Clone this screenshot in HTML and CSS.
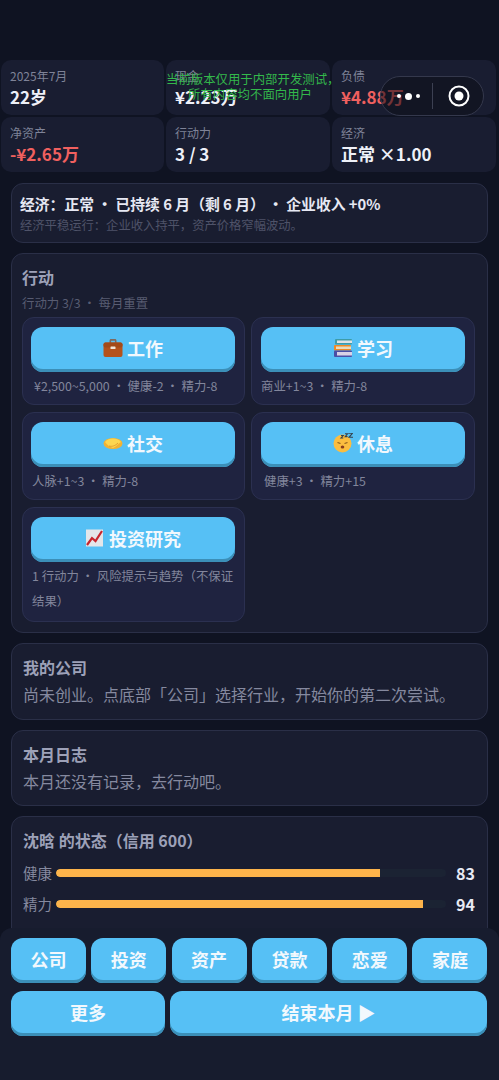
FILE: index.html
```html
<!DOCTYPE html>
<html lang="zh-CN">
<head>
<meta charset="utf-8">
<title>人生模拟</title>
<link rel="stylesheet" href="styles.css">
</head>
<body>
<div class="page">
  <div class="stats">
    <div class="stat"><div class="stat-label">2025年7月</div><div class="stat-value">22岁</div></div>
    <div class="stat"><div class="stat-label">现金</div><div class="stat-value">¥2.23万</div></div>
    <div class="stat"><div class="stat-label">负债</div><div class="stat-value red">¥4.88万</div></div>
    <div class="stat"><div class="stat-label">净资产</div><div class="stat-value red">-¥2.65万</div></div>
    <div class="stat"><div class="stat-label">行动力</div><div class="stat-value">3 / 3</div></div>
    <div class="stat"><div class="stat-label">经济</div><div class="stat-value">正常 ×1.00</div></div>
  </div>

  <section class="card econ">
    <div class="econ-title">经济：正常 · 已持续 6 月（剩 6 月） · 企业收入 +0%</div>
    <div class="econ-sub">经济平稳运行：企业收入持平，资产价格窄幅波动。</div>
  </section>

  <section class="card actions">
    <h2 class="card-title">行动</h2>
    <div class="actions-sub">行动力 3/3 · 每月重置</div>
    <div class="action-grid">
      <div class="action">
        <button class="btn btn-action">
          <svg class="emoji" viewBox="0 0 20 20"><path d="M6.500 5V2.700C6.500 1.800 7.200 1.100 8 1.100h4c.8 0 1.500.7 1.500 1.600V5h-1.600V2.800H8.100V5z" fill="#7d6a5f"/><rect x="0.500" y="4.500" width="19" height="14.500" rx="2" fill="#b5521b"/><rect x="0.500" y="4.500" width="19" height="5" rx="2" fill="#a34a18"/><rect x="7.500" y="8.500" width="5" height="2.500" rx=".6" fill="#f1e6d8"/></svg>
          工作
        </button>
        <div class="action-note pay">¥2,500~5,000 · 健康-2 · 精力-8</div>
      </div>
      <div class="action">
        <button class="btn btn-action">
          <svg class="emoji" viewBox="0 0 20 20"><rect x="2" y="1" width="17" height="5.500" rx="1" fill="#3e9ca8"/><rect x="4" y="2.500" width="15" height="2.500" fill="#dfe3e6"/><rect x="1" y="7" width="17" height="5.500" rx="1" fill="#f08a24"/><rect x="3" y="8.500" width="15" height="2.500" fill="#e7dcc0"/><rect x="1" y="12.500" width="18" height="6.500" rx="1" fill="#4a4fa6"/><rect x="4" y="14" width="15" height="3.500" fill="#d9d2e6"/></svg>
          学习
        </button>
        <div class="action-note">商业+1~3 · 精力-8</div>
      </div>
      <div class="action">
        <button class="btn btn-action">
          <svg class="emoji" viewBox="0 0 20 20"><ellipse cx="10" cy="10.500" rx="9.500" ry="5.500" fill="#f2b233"/><path d="M2 9c2-3 5-3.500 8-3.500S16 6 18 9c-2.500 1.500-4 4-8 6-3-1-6-3-8-6z" fill="#fdd650"/><path d="M6 13c3 .8 6 0 9-3" stroke="#d9922a" stroke-width=".8" fill="none"/></svg>
          社交
        </button>
        <div class="action-note">人脉+1~3 · 精力-8</div>
      </div>
      <div class="action">
        <button class="btn btn-action">
          <svg class="emoji" viewBox="0 0 20 20"><circle cx="9.500" cy="10.500" r="9" fill="#fbbd3f"/><path d="M4.500 9.500l3 1M14.500 9.500l-3 1" stroke="#8a5a1c" stroke-width="1.200" fill="none"/><ellipse cx="9.500" cy="14" rx="1.800" ry="1.500" fill="#8a3d1c"/><path d="M8 2.500h2.300L8 5h2.300M12 .8h2.500l-2.300 2.800h2.300M15.500 .3h4l-3.500 4h4" stroke="#34424f" stroke-width="1.100" fill="none"/></svg>
          休息
        </button>
        <div class="action-note rest">健康+3 · 精力+15</div>
      </div>
      <div class="action">
        <button class="btn btn-action">
          <svg class="emoji" viewBox="0 0 20 20"><rect x="1" y="1.500" width="17" height="17" fill="#e4e6ea"/><path d="M2 17l5-7 3.500 3L17 3" stroke="#c8262f" stroke-width="2.200" fill="none"/></svg>
          投资研究
        </button>
        <div class="action-note wrap">1 行动力 · 风险提示与趋势（不保证结果）</div>
      </div>
    </div>
  </section>

  <section class="card info">
    <h2 class="card-title">我的公司</h2>
    <p class="info-text">尚未创业。点底部「公司」选择行业，开始你的第二次尝试。</p>
  </section>

  <section class="card info">
    <h2 class="card-title">本月日志</h2>
    <p class="info-text">本月还没有记录，去行动吧。</p>
  </section>

  <section class="card status">
    <h2 class="card-title">沈晗 的状态（信用 600）</h2>
    <div class="bar-row">
      <span class="bar-label">健康</span>
      <div class="bar-track"><div class="bar-fill" style="width:83%"></div></div>
      <span class="bar-value">83</span>
    </div>
    <div class="bar-row">
      <span class="bar-label">精力</span>
      <div class="bar-track"><div class="bar-fill" style="width:94%"></div></div>
      <span class="bar-value">94</span>
    </div>
  </section>
</div>

<nav class="dock">
  <div class="dock-row six">
    <button class="btn btn-dock">公司</button>
    <button class="btn btn-dock">投资</button>
    <button class="btn btn-dock">资产</button>
    <button class="btn btn-dock">贷款</button>
    <button class="btn btn-dock">恋爱</button>
    <button class="btn btn-dock">家庭</button>
  </div>
  <div class="dock-row two">
    <button class="btn btn-dock">更多</button>
    <button class="btn btn-dock">结束本月 ▶</button>
  </div>
</nav>

<div class="notice">当前版本仅用于内部开发测试，<br>所有内容均不面向用户</div>

<div class="capsule">
  <div class="capsule-dots"><i class="dot"></i><i class="dot big"></i><i class="dot"></i></div>
  <div class="capsule-line"></div>
  <svg class="capsule-target" viewBox="0 0 22 22"><circle cx="11" cy="11" r="9.500" fill="none" stroke="#fff" stroke-width="2"/><circle cx="11" cy="11" r="4.500" fill="#fff"/></svg>
</div>
</body>
</html>
```

FILE: styles.css
```css
* { box-sizing: border-box; }
html, body { margin: 0; padding: 0; height: 1080px; overflow: hidden; }
body {
  background: #0f1322;
  font-family: "Noto Sans CJK SC", "Noto Sans", sans-serif;
  color: #e8eaf4;
  position: relative;
  width: 499px;
}
.page { padding: 60px 0 0; height: 1080px; overflow: hidden; }

.stats {
  display: grid;
  grid-template-columns: 163px 164px 164px;
  gap: 2px 2px;
  padding-left: 1px;
}
.stat {
  height: 55px;
  background: #191d31;
  border-radius: 10px;
  padding: 7px 9px 0;
}
.stat-label { font-size: 12px; line-height: 17px; color: #7f8398; }
.stat-value { font-size: 17px; line-height: 25px; font-weight: 700; color: #eef0f8; }
.stat-value.red { color: #f0605f; }

.card {
  margin: 0 11px 10px 11px;
  width: 477px;
  background: #191d30;
  border: 1px solid #2a2f47;
  border-radius: 12px;
}
.econ { margin-top: 11px; height: 60px; padding: 9px 8px 0; }
.econ-title { font-size: 14.800px; line-height: 21px; font-weight: 700; color: #e6e8f3; white-space: nowrap; }
.econ-sub { font-size: 12.300px; line-height: 18px; margin-top: 2px; color: #4f5369; }

.actions { padding: 12px 10px 0; height: 380px; }
.card-title { margin: 0; font-size: 16px; line-height: 22px; font-weight: 700; color: #9da1b8; }
.actions-sub { font-size: 12.400px; line-height: 18px; margin-top: 6px; color: #585c72; }

.action-grid {
  display: grid;
  grid-template-columns: 223px 224px;
  gap: 7px 6px;
  margin-top: 5px;
  align-items: start;
}
.action {
  background: #1f2340;
  border: 1px solid #2b3050;
  border-radius: 12px;
  padding: 9px 8px;
  height: 88px;
  display: flex;
  flex-direction: column;
}
.action:nth-child(even) { padding-left: 9px; }
.action:nth-child(5) { height: 115px; }

.btn {
  border: 0;
  border-radius: 12px;
  background: #56c0f5;
  box-shadow: inset 0 -3px 0 #3b8fb8;
  color: #f2f8fd;
  font-family: inherit;
  font-weight: 700;
  padding: 0;
  display: flex;
  align-items: center;
  justify-content: center;
}
.btn-action { height: 45px; width: 204px; flex: none; font-size: 18px; gap: 4px; padding-bottom: 3px; }
.emoji { width: 20px; height: 20px; flex: none; }

.action-note { font-size: 12.400px; line-height: 25px; color: #82869c; margin-top: 2px; white-space: nowrap; padding-left: 1px; }
.action-note.pay { padding-left: 3px; }
.action-note.rest { padding-left: 3px; }
.action-note.wrap { white-space: normal; width: 205px; }
.action:nth-child(2) .action-note { padding-left: 0; }

.info { padding: 12px 11px 0; }
.info:nth-of-type(3) { height: 77px; }
.info:nth-of-type(4) { height: 76px; }
.info-text { margin: 4px 0 0; font-size: 16px; line-height: 24px; color: #85899f; white-space: nowrap; }

.status { padding: 12px 12px 0 11px; height: 200px; }
.bar-row {
  display: flex;
  align-items: center;
  height: 31px;
}
.status .card-title + .bar-row { margin-top: 6px; }
.bar-label { font-size: 14.500px; line-height: 20px; width: 33px; color: #85899f; flex: none; }
.bar-track {
  width: 390px;
  height: 8px;
  border-radius: 4px;
  background: #1b2333;
  flex: none;
  overflow: hidden;
}
.bar-fill { height: 100%; background: #fdb44b; border-radius: 4px 0 0 4px; }
.bar-value { flex: 1; text-align: right; font-size: 16px; font-weight: 700; color: #e8eaf4; }

.dock {
  position: absolute;
  left: 0;
  right: 0;
  top: 928px;
  height: 152px;
  background: #171c2e;
  border-radius: 12px 12px 0 0;
  padding: 10px 11px 0;
}
.dock-row { display: grid; }
.dock-row.six { grid-template-columns: repeat(6, 75px); column-gap: 5.300px; }
.dock-row.two { grid-template-columns: 154px 317px; column-gap: 5px; margin-top: 8px; }
.btn-dock { height: 45px; font-size: 18px; padding-bottom: 3px; }

.notice {
  position: absolute;
  left: 166px;
  top: 72px;
  width: 168px;
  text-align: center;
  font-size: 12.400px;
  line-height: 15px;
  color: #33b84b;
  white-space: nowrap;
}

.capsule {
  position: absolute;
  left: 380px;
  top: 76px;
  width: 104px;
  height: 40px;
  border-radius: 20px;
  background: rgba(12, 14, 24, .55);
  border: 1px solid #34384c;
  display: flex;
  align-items: center;
}
.capsule-dots { width: 51px; display: flex; justify-content: center; align-items: center; gap: 4px; padding-left: 4px; }
.dot { width: 4px; height: 4px; border-radius: 50%; background: #fff; display: block; }
.dot.big { width: 7px; height: 7px; }
.capsule-line { width: 1px; height: 26px; background: #3c4052; }
.capsule-target { width: 22px; height: 22px; margin-left: 15px; }
```
